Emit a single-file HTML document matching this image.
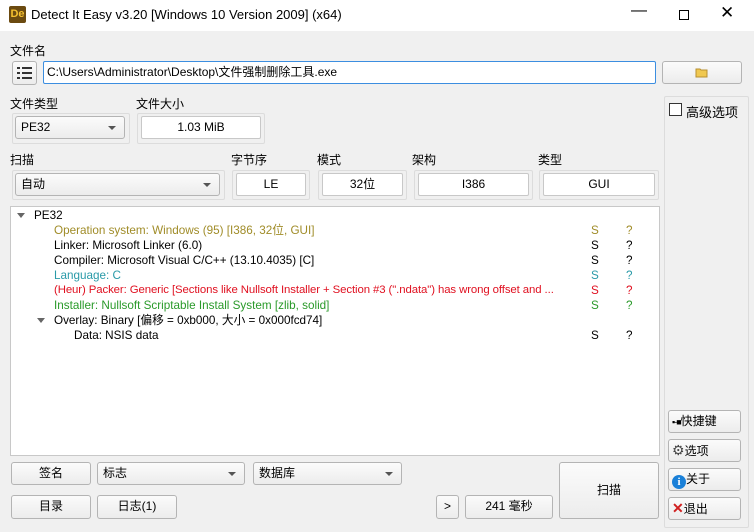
<!DOCTYPE html>
<html><head><meta charset="utf-8"><style>
*{box-sizing:border-box;margin:0;padding:0}
body{width:754px;height:532px;background:#f0f0f0;font-family:"Liberation Sans","Noto Sans CJK SC",sans-serif;font-size:12px;color:#000;position:relative;overflow:hidden}
.a{position:absolute}
.t{position:absolute;font-size:12px;white-space:nowrap}
.box{position:absolute;background:#fff;border:1px solid #c8c8c8;border-radius:2px;text-align:center;line-height:20px}
.btn{position:absolute;background:linear-gradient(#fbfbfb,#ececec);border:1px solid #b4b4b4;border-radius:3px;text-align:center;line-height:20px}
.cmb{position:absolute;background:linear-gradient(#fbfbfb,#ececec);border:1px solid #b4b4b4;border-radius:3px;line-height:20px;padding-left:5px}
.cmb:after{content:"";position:absolute;right:8px;top:9px;border-left:4px solid transparent;border-right:4px solid transparent;border-top:4px solid #555}
.grp{position:absolute;border:1px solid #dcdcdc;border-radius:2px}
.row{position:absolute;white-space:nowrap;font-size:11.7px;line-height:15px}
</style></head><body>
<div class="a" style="left:0;top:0;width:754px;height:31px;background:#fff"></div>
<div class="a" style="left:9px;top:6px;width:17px;height:17px;background:#6b4a10;border-radius:2px;color:#f5c030;font-weight:bold;font-size:11px;line-height:17px;text-align:center">De</div>
<div class="t" style="left:31px;top:7px;font-size:13px">Detect It Easy v3.20 [Windows 10 Version 2009] (x64)</div>
<div class="t" style="left:631px;top:2px;font-size:16px">&#8212;</div>
<div class="a" style="left:679px;top:10px;width:10px;height:10px;border:1px solid #000"></div>
<div class="t" style="left:720px;top:3px;font-size:17px">&#10005;</div>

<div class="t" style="left:10px;top:42px">文件名</div>
<div class="btn" style="left:12px;top:61px;width:25px;height:24px"><svg width="17" height="14" style="margin-top:4px" viewBox="0 0 17 14"><g fill="#333"><rect x="1" y="1" width="3" height="2"/><rect x="6" y="1" width="10" height="2"/><rect x="1" y="6" width="3" height="2"/><rect x="6" y="6" width="10" height="2"/><rect x="1" y="11" width="3" height="2"/><rect x="6" y="11" width="10" height="2"/></g></svg></div>
<div class="a" style="left:43px;top:61px;width:613px;height:23px;background:#fff;border:1px solid #3c8ee0;border-radius:2px;padding-left:3px;line-height:21px">C:\Users\Administrator\Desktop\文件强制删除工具.exe</div>
<div class="btn" style="left:662px;top:61px;width:80px;height:23px"><svg width="14" height="11" style="margin-top:5px" viewBox="0 0 14 11"><path d="M1 2h4l1 1h6v7H1z" fill="#f0c850" stroke="#b89030"/></svg></div>

<div class="grp" style="left:664px;top:96px;width:85px;height:432px"></div>
<div class="a" style="left:669px;top:103px;width:13px;height:13px;background:#fff;border:1px solid #333"></div>
<div class="t" style="left:686px;top:102px;font-size:13px">高级选项</div>

<div class="t" style="left:10px;top:95px">文件类型</div>
<div class="grp" style="left:12px;top:113px;width:118px;height:31px"></div>
<div class="cmb" style="left:15px;top:116px;width:110px;height:23px">PE32</div>
<div class="t" style="left:136px;top:95px">文件大小</div>
<div class="grp" style="left:137px;top:113px;width:128px;height:31px"></div>
<div class="box" style="left:141px;top:116px;width:120px;height:23px">1.03 MiB</div>

<div class="t" style="left:10px;top:151px">扫描</div>
<div class="grp" style="left:12px;top:170px;width:213px;height:30px"></div>
<div class="cmb" style="left:15px;top:173px;width:205px;height:23px">自动</div>
<div class="t" style="left:231px;top:151px">字节序</div>
<div class="grp" style="left:232px;top:170px;width:78px;height:30px"></div>
<div class="box" style="left:236px;top:173px;width:70px;height:23px">LE</div>
<div class="t" style="left:317px;top:151px">模式</div>
<div class="grp" style="left:318px;top:170px;width:89px;height:30px"></div>
<div class="box" style="left:322px;top:173px;width:81px;height:23px">32位</div>
<div class="t" style="left:412px;top:151px">架构</div>
<div class="grp" style="left:414px;top:170px;width:119px;height:30px"></div>
<div class="box" style="left:418px;top:173px;width:111px;height:23px">I386</div>
<div class="t" style="left:538px;top:151px">类型</div>
<div class="grp" style="left:539px;top:170px;width:120px;height:30px"></div>
<div class="box" style="left:543px;top:173px;width:112px;height:23px">GUI</div>

<div class="a" style="left:10px;top:206px;width:650px;height:250px;background:#fff;border:1px solid #c8c8c8"></div>
<div class="a" style="left:17px;top:213px;border-left:4px solid transparent;border-right:4px solid transparent;border-top:5px solid #666"></div>
<div class="row" style="left:34px;top:208px">PE32</div>
<div class="row" style="left:54px;top:223px;color:#a08c28">Operation system: Windows (95) [I386, 32位, GUI]</div>
<div class="row" style="left:54px;top:238px">Linker: Microsoft Linker (6.0)</div>
<div class="row" style="left:54px;top:253px">Compiler: Microsoft Visual C/C++ (13.10.4035) [C]</div>
<div class="row" style="left:54px;top:268px;color:#2a9aa8">Language: C</div>
<div class="row" style="left:54px;top:283px;color:#e01020;font-size:11.4px;letter-spacing:-0.1px">(Heur) Packer: Generic [Sections like Nullsoft Installer + Section #3 (".ndata") has wrong offset and ...</div>
<div class="row" style="left:54px;top:298px;color:#2a9a2a">Installer: Nullsoft Scriptable Install System [zlib, solid]</div>
<div class="a" style="left:37px;top:318px;border-left:4px solid transparent;border-right:4px solid transparent;border-top:5px solid #666"></div>
<div class="row" style="left:54px;top:313px">Overlay: Binary [偏移 = 0xb000, 大小 = 0x000fcd74]</div>
<div class="row" style="left:74px;top:328px">Data: NSIS data</div>
<div class="row" style="left:591px;top:223px;color:#a08c28">S</div><div class="row" style="left:626px;top:223px;color:#a08c28">?</div>
<div class="row" style="left:591px;top:238px">S</div><div class="row" style="left:626px;top:238px">?</div>
<div class="row" style="left:591px;top:253px">S</div><div class="row" style="left:626px;top:253px">?</div>
<div class="row" style="left:591px;top:268px;color:#2a9aa8">S</div><div class="row" style="left:626px;top:268px;color:#2a9aa8">?</div>
<div class="row" style="left:591px;top:283px;color:#e01020">S</div><div class="row" style="left:626px;top:283px;color:#e01020">?</div>
<div class="row" style="left:591px;top:298px;color:#2a9a2a">S</div><div class="row" style="left:626px;top:298px;color:#2a9a2a">?</div>
<div class="row" style="left:591px;top:328px">S</div><div class="row" style="left:626px;top:328px">?</div>

<div class="btn" style="left:11px;top:462px;width:80px;height:23px">签名</div>
<div class="cmb" style="left:97px;top:462px;width:148px;height:23px">标志</div>
<div class="cmb" style="left:253px;top:462px;width:149px;height:23px">数据库</div>
<div class="btn" style="left:11px;top:495px;width:80px;height:24px">目录</div>
<div class="btn" style="left:97px;top:495px;width:80px;height:24px">日志(1)</div>
<div class="btn" style="left:436px;top:495px;width:23px;height:24px">&gt;</div>
<div class="btn" style="left:465px;top:495px;width:88px;height:24px">241 毫秒</div>
<div class="btn" style="left:559px;top:462px;width:100px;height:57px;line-height:55px">扫描</div>

<div class="btn" style="left:668px;top:410px;width:73px;height:23px;text-align:left;padding-left:3px"><span style="font-size:9px;letter-spacing:-1px">▪-■</span>快捷键</div>
<div class="btn" style="left:668px;top:439px;width:73px;height:23px;text-align:left;padding-left:3px"><span style="color:#444;font-size:14px">⚙</span>选项</div>
<div class="btn" style="left:668px;top:468px;width:73px;height:23px;text-align:left;padding-left:3px"><span style="display:inline-block;width:14px;height:14px;border-radius:7px;background:#1a80d8;color:#fff;font-weight:bold;font-size:11px;line-height:14px;text-align:center;vertical-align:-2px;font-family:'Liberation Serif',serif">i</span>关于</div>
<div class="btn" style="left:668px;top:497px;width:73px;height:23px;text-align:left;padding-left:3px"><span style="color:#d02020;font-weight:bold;font-size:14px">✕</span>退出</div>
</body></html>
